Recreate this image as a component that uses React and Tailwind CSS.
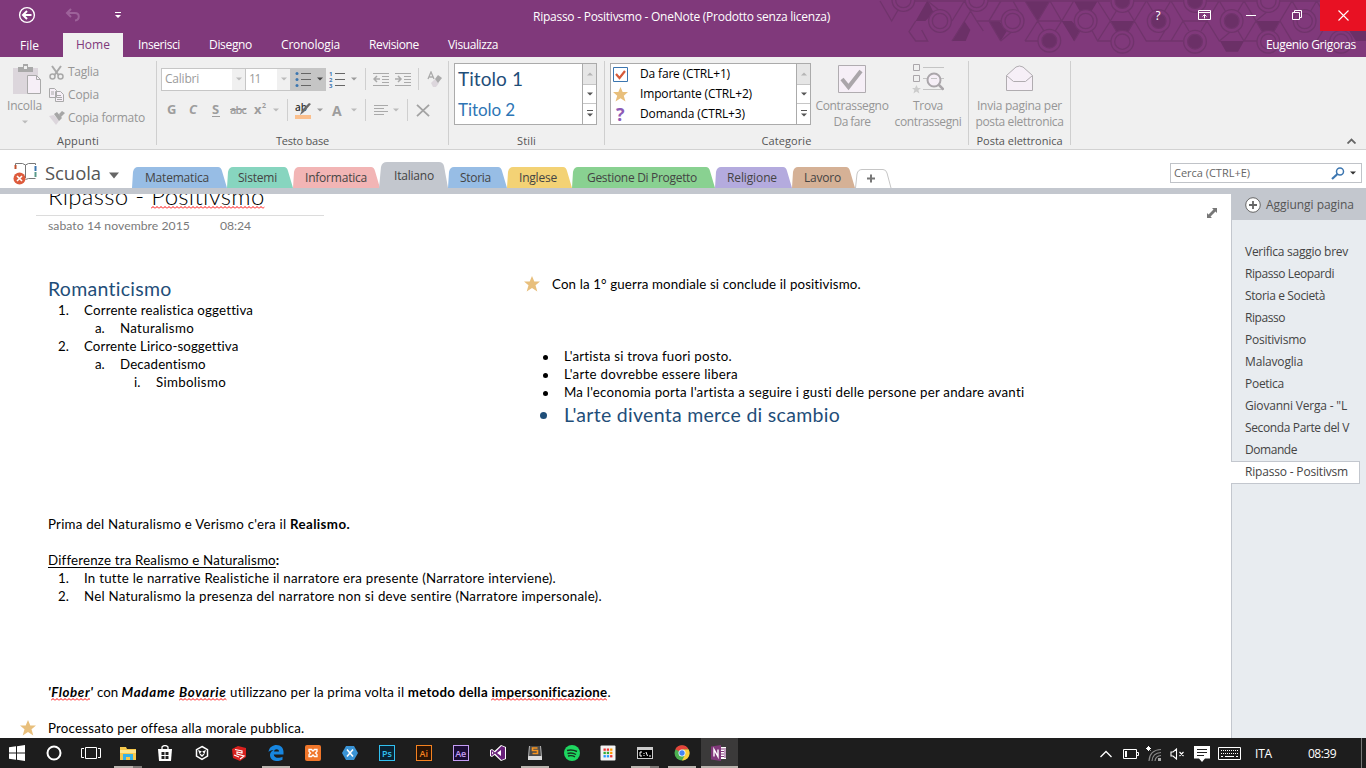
import React, { useLayoutEffect, useRef } from "react";

/* Text run tracked so that it spans a fixed measure. */
function T({ w, className = "", children }) {
  const ref = useRef(null);
  useLayoutEffect(() => {
    const el = ref.current;
    el.style.letterSpacing = "0px";
    const n = el.textContent.length || 1;
    el.style.letterSpacing = (w - el.getBoundingClientRect().width) / n + "px";
  }, [w]);
  return (
    <span ref={ref} className={"inline-block shrink-0 whitespace-pre " + className}>
      {children}
    </span>
  );
}

const Sep = ({ className = "" }) => <div className={"w-px shrink-0 bg-[#cfcfcf] " + className} />;
const Caret = ({ className = "text-[#555]" }) => (
  <svg width="6" height="4" viewBox="0 0 6 4" className={"shrink-0 " + className}>
    <path d="M0 .5h6L3 3.5z" fill="currentColor" />
  </svg>
);
const Star = ({ size = 16, color = "#e8bf7c" }) => (
  <svg width={size} height={size} viewBox="0 0 16 16" className="shrink-0">
    <path d="M8 0l2.300 5.400H16l-4.500 3.800 1.800 6.300L8 12l-5.300 3.500 1.800-6.300L0 5.400h5.700z" fill={color} />
  </svg>
);

function HeaderPattern() {
  const rings = [[100, 0], [210, 63], [320, 0], [428, 63], [647, 63], [757, 125], [1195, 125], [1304, 63], [1413, 125], [1195, 3]];
  const dots = [[538, 122], [757, 3], [866, 63], [975, 3], [975, 125], [1085, 63]];
  return (
    <svg className="absolute right-0 top-0" width="496" height="57" viewBox="0 0 1488 171">
      <g fill="#6b3067">
        <path d="M173 0l18 38-25 25h-29zM283 63l18 27-14 33h-41zM357 63h30l25 28-20 32zM465 3h75l-37 60-20-30zM612 3h71l-18 30h-36zM575 63h30l25 28-18 32zM722 63h71l-18 33h-36zM1158 63h72l-18 33h-36zM1050 123h72l-18 32h-36zM1450 40l20-37h18v120h-30l-20-30z" />
      </g>
      <g fill="none" stroke="#70346c" strokeWidth="4">
        <path d="M30 3l35 60L100 3M130 3h160M350 3h370M790 3h150M1010 3h478M173 3l37 30M137 63l-20 32 20 28h36l-18-33M246 63l37-60 37 60 20 30M246 123l38-60 36-60M320 63h75M357 63l36-60h36l18 32M392 123l36-30M392 3l-35 60 35 60M465 123l38-60 36-60M465 123h45M465 3l38 60 20 32M503 63h72l36-60M575 63l-35-60M575 63l-22 34M612 123l18-30M665 90l18 33h40M683 3l38 60 18 30M683 123l38-60 36-60M793 63l-36-60M793 63l-36 60M793 63l18 30 18 30h110M793 63l36-60M830 3l18 30M902 3l-18 30M884 93l-18 30M939 63l-36-60M939 63l-36 60M939 63h72M939 63l18 30M1011 63l37 60 36-30M1011 63l36-60h75l36 60-36 60M1011 63l-18 30M1048 3l18 30M1122 3l-18 30M1104 93l18 30h40M1158 63l36-30M1158 63l18 30M1230 63l-18 30M1230 63l36-60 18 30M1230 63l36 60h110M1340 3l-18 30M1340 3l36 60 36-60M1376 63l-36 60M1376 63l18 30M1376 63h112" />
        {rings.map(([x, y], i) => (
          <g key={i}>
            <circle cx={x} cy={y} r="34" fill="#80397b" />
            <circle cx={x} cy={y} r="23" />
          </g>
        ))}
        {dots.map(([x, y], i) => (
          <g key={i}>
            <circle cx={x} cy={y} r="34" fill="#80397b" />
            <circle cx={x} cy={y} r="22" fill="#6b3067" />
          </g>
        ))}
      </g>
    </svg>
  );
}

function Header() {
  return (
    <header className="relative h-[57px] overflow-hidden bg-[#80397b] text-white">
      <HeaderPattern />
      <div className="relative flex h-[33px] items-start">
        <div className="flex w-[533px] items-center pl-[18px] pt-[6px]">
          <svg width="18" height="18" viewBox="0 0 18 18" fill="none" stroke="#fff">
            <circle cx="9" cy="9" r="7.4" strokeWidth="1.4" />
            <path d="M13.5 9H5.5M9 5L5 9l4 4" strokeWidth="2" />
          </svg>
          <svg className="ml-[29px]" width="16" height="14" viewBox="0 0 16 14" fill="none" stroke="#9d629a" strokeWidth="2">
            <path d="M2 5h8c5 0 5 7 0 7.500M6 1L2 5l4 4" />
          </svg>
          <svg className="ml-[34px]" width="6" height="8" viewBox="0 0 6 8" fill="#fff">
            <path d="M0 1h6v1H0zM0 4h6L3 7z" />
          </svg>
        </div>
        <div className="flex h-[33px] w-[623px] items-center">
          <T w={297} className="text-[12px]">Ripasso - Positivsmo - OneNote (Prodotto senza licenza)</T>
        </div>
        <svg width="164" height="31" viewBox="0 0 164 31" fill="none" stroke="#fff">
          <text x="-1" y="20" fill="#fff" stroke="none" fontSize="13" fontFamily="Open Sans, sans-serif">?</text>
          <path d="M42.500 10.500h12v9h-12zM42.500 12.500h12M48.500 18.500v-4M46.500 16.500l2-2 2 2M90 15.500h10" />
          <path d="M136.500 12.500h7v7h-7zM138.500 12v-1.500h7v7H144" />
        </svg>
        <div className="flex h-[31px] flex-1 items-center justify-center bg-[#e81123]">
          <svg width="11" height="11" viewBox="0 0 11 11" stroke="#fff" strokeWidth="1.100"><path d="M.5.5l10 10M10.500.5l-10 10" /></svg>
        </div>
      </div>
      <div className="relative flex h-[24px] items-center text-[12px]">
        <T w={19} className="ml-[20px] mt-px">File</T>
        <div className="ml-[24px] flex h-[24px] w-[60px] items-center bg-[#f0f0f0] pl-[13px] text-[#80397b]"><T w={34}>Home</T></div>
        <T w={42} className="ml-[15px]">Inserisci</T>
        <T w={43} className="ml-[29px]">Disegno</T>
        <T w={59} className="ml-[29px]">Cronologia</T>
        <T w={50} className="ml-[29px]">Revisione</T>
        <T w={50} className="ml-[29px]">Visualizza</T>
        <T w={90} className="ml-auto mr-[10px]">Eugenio Grigoras</T>
      </div>
    </header>
  );
}

function Label({ w, children }) {
  return <div className="flex h-[16px] items-center justify-center text-[11px] text-[#555]"><T w={w}>{children}</T></div>;
}

function ClipboardGroup() {
  return (
    <section className="flex w-[156px] flex-col">
      <div className="flex h-[76px] text-[12px] text-[#969696]">
        <div className="flex w-[49px] flex-col items-center pt-[7px]">
          <svg width="30" height="31" viewBox="0 0 30 31" className="ml-[5px]">
            <path d="M1 4h25v26H1z" fill="#dcd6dc" />
            <path d="M6 3h5V0h5v3h5v5H6z" fill="#a9a9a9" /><path d="M12 2h3v3h-3z" fill="#f0f0f0" />
            <path d="M15.500 11.500h9l4 4v14h-13z" fill="#f6eff7" stroke="#aaa" /><path d="M24.500 11.500v4h4" fill="none" stroke="#aaa" />
          </svg>
          <T w={35} className="mt-[3px] leading-[16px]">Incolla</T>
          <Caret className="mt-[6px] text-[#bbb]" />
        </div>
        <div className="flex flex-col pt-[4px]">
          <div className="flex h-[22px] items-center">
            <svg width="15" height="15" viewBox="0 0 15 15" fill="none" stroke="#a9a9a9" strokeWidth="1.500">
              <circle cx="3.500" cy="11.500" r="2.500" /><circle cx="11.500" cy="11.500" r="2.500" /><path d="M3 1l6.500 9M12 1L5.500 10" strokeWidth="2" />
            </svg>
            <T w={31} className="ml-[4px]">Taglia</T>
          </div>
          <div className="flex h-[23px] items-center">
            <svg width="15" height="14" viewBox="0 0 15 14" fill="#f6eff7" stroke="#a9a9a9">
              <path d="M.5.5h5l2 2v7h-7zM6.500 3.500h5l3 3v7h-8z" /><path d="M2 4h3M2 6h3M8 7.500h4M8 9.500h5M8 11.500h5" />
            </svg>
            <T w={31} className="ml-[4px]">Copia</T>
          </div>
          <div className="flex h-[23px] items-center">
            <svg width="16" height="14" viewBox="0 0 16 14">
              <path d="M0 5l5-1 5 6-3 4z" fill="#dcd6dc" /><path d="M5 3l3-2 5 6-3 3zM10 3l3-3 3 2-4 4z" fill="#a6a6a6" />
            </svg>
            <T w={77} className="ml-[3px]">Copia formato</T>
          </div>
        </div>
      </div>
      <Label w={42}>Appunti</Label>
    </section>
  );
}

const Lines = ({ numbered }) => (
  <svg width="16" height="17" viewBox="0 0 16 17" className="shrink-0">
    <path d="M6 2.500h10M6 8.500h10M6 14.500h10" stroke="#666" />
    {numbered ? (
      <g fontSize="6" fontFamily="Open Sans, sans-serif" fontWeight="700" fill="#3c76b0"><text x="0" y="5">1</text><text x="0" y="11">2</text><text x="0" y="17">3</text></g>
    ) : (
      <g fill="#3c76b0"><circle cx="2" cy="2.500" r="1.500" /><circle cx="2" cy="8.500" r="1.500" /><circle cx="2" cy="14.500" r="1.500" /></g>
    )}
  </svg>
);

const Indent = ({ out }) => (
  <svg width="17" height="14" viewBox="0 0 17 14" stroke="#aaa" fill="none" className="shrink-0">
    <path d="M0 1.500h16M9 4.500h7M9 7.500h7M9 10.500h7M0 13.500h16" />
    {out ? <path d="M7 7H1M4 4L1 7l3 3" strokeWidth="1.500" /> : <path d="M0 7h6M3 4l3 3-3 3" strokeWidth="1.500" />}
  </svg>
);

function FontGroup() {
  return (
    <section className="flex w-[291px] flex-col">
      <div className="flex h-[37px] items-center pl-[4px] pt-[7px] text-[12px] text-[#9b9b9b]">
        <div className="flex h-[23px] w-[85px] items-center border border-[#c6c6c6] bg-white pl-[3px]">
          <T w={34}>Calibri</T><div className="ml-auto flex h-full w-[13px] items-center justify-center bg-[#f0f0f0]"><Caret className="text-[#bbb]" /></div>
        </div>
        <div className="flex h-[23px] w-[45px] items-center border border-l-0 border-[#c6c6c6] bg-white pl-[3px]">
          <T w={11}>11</T><div className="ml-auto flex h-full w-[13px] items-center justify-center bg-[#f0f0f0]"><Caret className="text-[#bbb]" /></div>
        </div>
        <div className="flex h-[23px] w-[35px] items-center bg-[#c5c5c5] pl-[4px]"><Lines /><Caret className="ml-[6px] text-[#444]" /></div>
        <div className="ml-[3px] flex items-center"><Lines numbered /><Caret className="ml-[6px]" /></div>
        <Sep className="ml-[8px] h-[22px]" />
        <div className="ml-[7px] flex gap-[5px]"><Indent out /><Indent /></div>
        <Sep className="ml-[6px] h-[22px]" />
        <svg className="ml-[8px]" width="15" height="16" viewBox="0 0 15 16">
          <path d="M1 8l3-7 3 7M2.500 6h4" stroke="#aaa" fill="none" strokeWidth="1.300" /><path d="M4 12l4-4 4 4-3 4H6z" fill="#dcd6dc" /><path d="M8 8l3-4 4 3-4 5z" fill="#aaa" />
        </svg>
      </div>
      <div className="flex h-[32px] items-center pl-[10px] text-[13px] text-[#9d9d9d]">
        <T w={9} className="font-bold">G</T>
        <T w={9} className="ml-[13px] font-bold italic">C</T>
        <T w={8} className="ml-[14px] font-bold underline underline-offset-2">S</T>
        <T w={16} className="ml-[10px] text-[11px] font-semibold line-through">abc</T>
        <T w={8} className="ml-[8px] font-bold">x</T>
        <T w={4} className="mb-[8px] text-[7px] font-bold">2</T>
        <Caret className="ml-[7px] text-[#bbb]" />
        <Sep className="ml-[8px] h-[22px]" />
        <svg className="ml-[7px]" width="17" height="17" viewBox="0 0 17 17">
          <text x="0" y="9" fontSize="10" fontWeight="600" fontFamily="Open Sans, sans-serif" fill="#333">ab</text>
          <path d="M0 13h16v4H0z" fill="#fbbf8c" /><path d="M16 2l-7 8-4 3 2-5 7-7z" fill="#6a6a6a" />
        </svg>
        <Caret className="ml-[5px]" />
        <T w={10} className="ml-[9px] text-[14px] font-bold">A</T>
        <Caret className="ml-[9px] text-[#bbb]" />
        <Sep className="ml-[8px] h-[22px]" />
        <svg className="ml-[8px]" width="14" height="12" viewBox="0 0 14 12" stroke="#aaa"><path d="M0 1.500h14M0 4.500h10M0 7.500h14M0 10.500h10" /></svg>
        <Caret className="ml-[5px] text-[#bbb]" />
        <Sep className="ml-[8px] h-[22px]" />
        <svg className="ml-[8px]" width="15" height="13" viewBox="0 0 16 14" stroke="#a3a3a3" strokeWidth="2"><path d="M1 1l13 12M14 1L1 13" /></svg>
      </div>
      <div className="h-[7px]" />
      <Label w={53}>Testo base</Label>
    </section>
  );
}

function Scroller() {
  return (
    <div className="flex w-[14px] shrink-0 flex-col border-l border-[#ababab]">
      <div className="flex h-[21px] items-center justify-center border-b border-[#c6c6c6] bg-[#e6e6e6]"><Caret className="rotate-180 text-[#b5b5b5]" /></div>
      <div className="flex h-[19px] items-center justify-center border-b border-[#c6c6c6]"><Caret /></div>
      <div className="flex h-[19px] flex-col items-center justify-center gap-[2px]"><div className="h-px w-[6px] bg-[#555]" /><Caret /></div>
    </div>
  );
}

function StylesGroup() {
  return (
    <section className="flex w-[155px] flex-col">
      <div className="ml-[5px] mt-[6px] flex h-[62px] w-[143px] border border-[#ababab] bg-white">
        <div className="flex flex-1 flex-col items-start pl-[3px] font-[Lato]">
          <T w={65} className="h-[31px] text-[19px] leading-[30px] text-[#1f4e79]">Titolo 1</T>
          <T w={57} className="h-[29px] text-[17px] leading-[29px] text-[#2e75b5]">Titolo 2</T>
        </div>
        <Scroller />
      </div>
      <div className="h-[8px]" />
      <Label w={19}>Stili</Label>
    </section>
  );
}

function TagsGroup() {
  return (
    <section className="flex w-[363px] flex-col">
      <div className="flex h-[76px]">
        <div className="ml-[5px] mt-[6px] flex h-[62px] w-[201px] border border-[#ababab] bg-white text-[12px] text-black">
          <div className="flex flex-1 flex-col pl-[2px]">
            <div className="flex h-[20px] items-center gap-[12px]">
              <svg width="15" height="15" viewBox="0 0 15 15" fill="none"><path d="M.5.5h14v14H.5z" stroke="#3c76b0" /><path d="M3 7l3.500 4L12 4" stroke="#d55a3a" strokeWidth="2.200" /></svg>
              <T w={90}>Da fare (CTRL+1)</T>
            </div>
            <div className="flex h-[20px] items-center gap-[12px]"><Star size={15} /><T w={112}>Importante (CTRL+2)</T></div>
            <div className="flex h-[20px] items-center">
              <T w={9} className="ml-[3px] w-[15px] text-[18px] font-bold leading-[20px] text-[#8e5bb5]">?</T><T w={105} className="ml-[9px]">Domanda (CTRL+3)</T>
            </div>
          </div>
          <Scroller />
        </div>
        <div className="ml-[4px] flex w-[74px] flex-col items-center pt-[8px] text-[12px] leading-[16px] text-[#969696]">
          <svg width="28" height="28" viewBox="0 0 28 28"><path d="M.5.5h27v27H.5z" fill="#f6eff7" stroke="#b0acb0" /><path d="M4 14l6.500 8L23 6" fill="none" stroke="#aaa6aa" strokeWidth="4" /></svg>
          <T w={73} className="mt-[5px]">Contrassegno</T><T w={37}>Da fare</T>
        </div>
        <div className="ml-[4px] flex w-[70px] flex-col items-center pt-[6px] text-[12px] leading-[16px] text-[#969696]">
          <svg width="32" height="31" viewBox="0 0 32 31" fill="none" stroke="#aaa6aa">
            <path d="M1.500 1.500h6v6h-6zM1.500 12.500h6v6h-6z" /><path d="M11 4.500h21M11 15.500h21M11 26.500h21" stroke="#c4c4c4" />
            <circle cx="22" cy="17" r="6.500" fill="#f6eff7" strokeWidth="2" /><path d="M26.500 21.500l5 5" strokeWidth="2.500" /><path d="M19 15.500h6" stroke="#c4c4c4" />
            <path d="M4.500 22l1.300 3H9l-2.600 2 1 3.500-3-2-3 2 1-3.500L0 25h3z" fill="#ccc" stroke="none" />
          </svg>
          <T w={30} className="mt-[4px]">Trova</T><T w={67}>contrassegni</T>
        </div>
      </div>
      <Label w={50}>Categorie</Label>
    </section>
  );
}

function MailGroup() {
  return (
    <section className="flex w-[101px] flex-col">
      <div className="flex h-[76px] flex-col items-center pt-[8px] text-[12px] leading-[16px] text-[#969696]">
        <svg width="27" height="27" viewBox="0 0 27 27" fill="#f6eff7" stroke="#b0acb0"><path d="M.5 10.500L10 2q3.500-2 7 0l9.500 8.500v15H.5z" /><path d="M.5 10.500l7 6h12l7-6" /></svg>
        <T w={85} className="mt-[6px]">Invia pagina per</T><T w={88}>posta elettronica</T>
      </div>
      <Label w={86}>Posta elettronica</Label>
    </section>
  );
}

function Ribbon() {
  const sep = "mt-[4px] h-[84px]";
  return (
    <div className="flex h-[93px] border-b border-[#d2d2d2] bg-[#f0f0f0]">
      <ClipboardGroup /><Sep className={sep} />
      <FontGroup /><Sep className={sep} />
      <StylesGroup /><Sep className={sep} />
      <TagsGroup /><Sep className={sep} />
      <MailGroup /><Sep className={sep} />
      <svg className="mb-[5px] ml-auto mr-[10px] self-end" width="9" height="6" viewBox="0 0 9 6" fill="none" stroke="#666" strokeWidth="1.800"><path d="M.5 5.500l4-4 4 4" /></svg>
    </div>
  );
}

const tabs = [
  ["Matematica", 95, 64, 13, "#97bde5"],
  ["Sistemi", 66, 39, 11, "#87d5bf"],
  ["Informatica", 87, 62, 12, "#f2b5b5"],
  ["Italiano", 68, 40, 14, "#c3c7ce", true],
  ["Storia", 59, 31, 12, "#97bde5"],
  ["Inglese", 65, 38, 12, "#f3d275"],
  ["Gestione Di Progetto", 143, 110, 15, "#89d191"],
  ["Religione", 77, 50, 12, "#b4abde"],
  ["Lavoro", 63, 37, 12, "#d5b196"],
];

function SectionTabs() {
  return (
    <div className="flex h-[38px] items-end bg-white">
      <svg className="mb-[2px] ml-[13px]" width="25" height="24" viewBox="0 0 25 24" fill="none">
        <path d="M2.500 3V1.500h7l3 1.500 3-1.500h7V3M12.500 3v13M12.500 17.500l3-1h7" stroke="#777" />
        <path d="M2.500 3v4" stroke="#c0502e" strokeWidth="2" /><path d="M22.500 4v5" stroke="#3c76b0" strokeWidth="2" /><path d="M22.500 10v5" stroke="#5a9a8a" strokeWidth="2" />
        <circle cx="6.500" cy="16.500" r="6" fill="#dd5b3c" /><path d="M4 14l5 5M9 14l-5 5" stroke="#fff" strokeWidth="1.600" />
      </svg>
      <T w={56} className="mb-[3px] ml-[7px] text-[18.500px] leading-[24px] text-[#555]">Scuola</T>
      <svg className="mb-[9px] ml-[8px]" width="10" height="7" viewBox="0 0 10 7"><path d="M0 .5h10l-5 6z" fill="#666" /></svg>
      <div className="ml-[13px] flex items-end text-[12px] text-[#444]">
        {tabs.map(([name, w, tw, pad, color, active]) => (
          <div key={name} className="relative flex items-center" style={{ width: w, height: active ? 26 : 21, paddingLeft: pad }}>
            <svg className="absolute left-0 top-0 overflow-visible" width={w} height={active ? 26 : 21}>
              <path fill={color} d={active ? `M-1 26L1 5Q2 0 7 0H${w - 9}Q${w - 5} 0 ${w - 4} 4L${w} 26Z` : `M0 21L1 5Q2 0 6 0H${w - 9}Q${w - 6} 0 ${w - 5} 4L${w} 21Z`} />
            </svg>
            <T w={tw} className={"relative " + (active ? "mt-[2px]" : "")}>{name}</T>
          </div>
        ))}
        <svg width="37" height="19" viewBox="0 0 37 19" fill="none">
          <path d="M.5 19L2 5Q3 .5 7 .5H28Q31 .5 32 4L36 19" stroke="#c6c6c6" /><path d="M12 9.500h8M16 5.500v8" stroke="#777" strokeWidth="2" />
        </svg>
      </div>
      <div className="mb-[5px] ml-auto mr-[4px] flex h-[20px] w-[192px] items-center border border-[#c0c3c8] pl-[3px] text-[11px] text-[#666]">
        <T w={76}>Cerca (CTRL+E)</T>
        <svg className="ml-auto" width="14" height="13" viewBox="0 0 14 13" fill="none" stroke="#3c76b0"><circle cx="9" cy="4.500" r="3.500" strokeWidth="1.500" /><path d="M6.500 7L1 12" strokeWidth="2.200" /></svg>
        <Caret className="ml-[5px] mr-[5px] text-[#333]" />
      </div>
    </div>
  );
}

function Item({ mark, mw = "w-[12px]", indent, gap = "gap-[15px]", w, children }) {
  return (
    <div className={"flex h-[18px] items-center leading-[18px] " + indent + " " + gap}>
      <span className={"shrink-0 whitespace-pre " + mw}>{mark}</span>
      <T w={w}>{children}</T>
    </div>
  );
}

const Squiggle = ({ children, className = "bottom-0" }) => (
  <span className="relative inline-block">
    {children}
    <svg className={"absolute left-0 h-[3px] w-full " + className} height="3">
      <defs><pattern id="sq" width="4" height="3" patternUnits="userSpaceOnUse"><path d="M0 2.500L2 .5l2 2" fill="none" stroke="#f00" /></pattern></defs>
      <rect width="100%" height="3" fill="url(#sq)" />
    </svg>
  </span>
);

/* Free-form page: every block is a note container placed anywhere on the canvas. */
function Canvas() {
  return (
    <main className="relative flex-1 overflow-hidden bg-white font-[Lato] text-[13.300px] text-black">
      <div className="absolute left-[36px] top-[-14px] w-[288px] border-b border-[#dcdcdc] pl-[12px]">
        <T w={217} className="block h-[35px] w-max text-[24px] font-light leading-[32px]">Ripasso - <Squiggle className="bottom-[3px]">Positivsmo</Squiggle></T>
      </div>
      <div className="absolute left-[48px] top-[23px] flex text-[12.200px] leading-[18px] text-[#7a7a7a]">
        <T w={142}>sabato 14 novembre 2015</T><T w={31} className="ml-[30px]">08:24</T>
      </div>
      <svg className="absolute left-[1206px] top-[13px]" width="12" height="12" viewBox="0 0 12 12" fill="#777"><path d="M6 1h5v5L9.500 4.500l-5 5L6 11H1V6l1.500 1.500 5-5z" /></svg>

      <div className="absolute left-[48px] top-[82px] flex flex-col">
        <T w={124} className="self-start text-[19.500px] leading-[25px] text-[#1f4e79]">Romanticismo</T>
        <Item mark="1." indent="pl-[10px]" gap="gap-[14px]" w={169}>Corrente realistica oggettiva</Item>
        <Item mark="a." indent="pl-[47px]" gap="gap-[13px]" w={74}>Naturalismo</Item>
        <Item mark="2." indent="pl-[10px]" gap="gap-[14px]" w={154}>Corrente Lirico-soggettiva</Item>
        <Item mark="a." indent="pl-[47px]" gap="gap-[13px]" w={86}>Decadentismo</Item>
        <Item mark="i." indent="pl-[86px]" gap="gap-[10px]" w={70}>Simbolismo</Item>
      </div>

      <div className="absolute left-[524px] top-[81px] flex items-center gap-[12px]">
        <Star /><T w={309} className="leading-[18px]">Con la 1° guerra mondiale si conclude il positivismo.</T>
      </div>
      <div className="absolute left-[540px] top-[153px] flex flex-col">
        {[["L'artista si trova fuori posto.", 168], ["L'arte dovrebbe essere libera", 174], ["Ma l'economia porta l'artista a seguire i gusti delle persone per andare avanti", 461]].map(([s, w]) => (
          <div key={s} className="flex h-[18px] items-center pl-[3px]">
            <div className="mr-[16px] mt-[2px] h-[5px] w-[5px] rounded-full bg-black" /><T w={w} className="leading-[18px]">{s}</T>
          </div>
        ))}
        <div className="flex h-[26px] items-center text-[#1f4e79]">
          <div className="mr-[17px] mt-[2px] h-[7px] w-[7px] rounded-full bg-[#1f4e79]" /><T w={276} className="text-[19.500px] leading-[25px]">L'arte diventa merce di scambio</T>
        </div>
      </div>

      <div className="absolute left-[48px] top-[321px] flex flex-col items-start leading-[18px]">
        <div className="flex"><T w={242}>Prima del Naturalismo e Verismo c'era il </T><T w={60} className="font-bold">Realismo.</T></div>
        <T w={231} className="mt-[18px]"><u className="underline-offset-2">Differenze tra Realismo e Naturalismo</u><b>:</b></T>
        <Item mark="1." indent="pl-[10px]" gap="gap-[14px]" w={472}>In tutte le narrative Realistiche il narratore era presente (Narratore interviene).</Item>
        <Item mark="2." indent="pl-[10px]" gap="gap-[14px]" w={518}>Nel Naturalismo la presenza del narratore non si deve sentire (Narratore impersonale).</Item>
      </div>

      <div className="absolute left-[20px] top-[489px] flex flex-col items-start leading-[18px]">
        <div className="ml-[28px] flex">
          <T w={45.5} className="font-bold italic">'<Squiggle>Flober</Squiggle>'</T>
          <T w={28}> con </T>
          <T w={105} className="font-bold italic">Madame <Squiggle>Bovarie</Squiggle></T>
          <T w={181.5}> utilizzano per la prima volta il </T>
          <T w={199.5} className="font-bold">metodo della <Squiggle>impersonificazione</Squiggle></T>
          <T w={4}>.</T>
        </div>
        <div className="mt-[18px] flex items-center gap-[12px]"><Star /><T w={256}>Processato per offesa alla morale pubblica.</T></div>
      </div>
    </main>
  );
}

const pages = [
  ["Verifica saggio brev", 103], ["Ripasso Leopardi", 89], ["Storia e Società", 80], ["Ripasso", 40], ["Positivismo", 61],
  ["Malavoglia", 58], ["Poetica", 39], ['Giovanni Verga - "L', 102], ["Seconda Parte del V", 104], ["Domande", 52],
];

function PageList() {
  return (
    <aside className="flex w-[135px] flex-col bg-[#e8ecf0] text-[12px] text-[#444]">
      <div className="flex h-[26px] items-center bg-[#c3c7ce] pb-[4px] pl-[14px] text-[#555]">
        <svg width="16" height="16" viewBox="0 0 16 16"><circle cx="8" cy="8" r="7.300" fill="#fff" stroke="#666" /><path d="M4 8h8M8 4v8" stroke="#666" strokeWidth="1.800" /></svg>
        <T w={88} className="ml-[5px]">Aggiungi pagina</T>
      </div>
      <div className="flex flex-col border-l border-[#c3c7ce] pl-[13px] pt-[21px]">
        {pages.map(([s, w]) => (
          <div key={s} className="flex h-[22px] items-center"><T w={w}>{s}</T></div>
        ))}
      </div>
      <div className="mr-[6px] flex h-[23px] items-center border border-l-0 border-[#c3c7ce] bg-white pb-px pl-[14px]"><T w={103}>Ripasso - Positivsm</T></div>
      <div className="flex-1 border-l border-[#c3c7ce]" />
    </aside>
  );
}

function Adobe({ label, color, bg }) {
  return <div className="flex h-[16px] w-[16px] items-center justify-center border text-[9px] font-semibold leading-none" style={{ color, borderColor: color, background: bg }}>{label}</div>;
}

const S = ({ children, s = 16 }) => <svg width={s} height={s} viewBox="0 0 16 16" fill="none">{children}</svg>;

const apps = [
  { icon: <S><path d="M0 2.300l7-1v6.200H0zM8 1.200L16 0v7.500H8zM0 8.500h7v6.200l-7-1zM8 8.500h8V16l-8-1.200z" fill="#fff" /></S> },
  { icon: <S><circle cx="8" cy="8" r="6.500" stroke="#fff" strokeWidth="2" /></S> },
  { icon: <svg width="20" height="14" viewBox="0 0 20 14" fill="none" stroke="#fff"><path d="M4.500 1.500h11v11h-11zM3 2.500H.5v9H3M17 2.500h2.500v9H17" /></svg> },
  { icon: <S><path d="M0 2h6l1 2h9v11H0z" fill="#f6c84c" /><path d="M0 5h16v3H0z" fill="#fde58f" /><path d="M3 15V9h10v6h-3v-3H6v3z" fill="#35b1e8" /></S>, bar: true, double: true },
  { icon: <S><path d="M1 4h14l-1 12H2z" fill="#fff" /><path d="M5 5V2q3-3 6 0v3" stroke="#fff" strokeWidth="1.300" /><path d="M4.500 7h3v3h-3zM8.500 7h3v3h-3zM4.500 11h3v3h-3zM8.500 11h3v3h-3z" fill="#222" /></S> },
  { icon: <S><path d="M8 1.500l5.500 3.200v6.500L8 14.500l-5.500-3.300V4.700z" stroke="#fff" strokeWidth="1.500" /><path d="M4 5l4 1.500L12 5l-2 5-2 2-2-2z" fill="#fff" /><path d="M8 6l2 2.500L8 10 6 8.500z" fill="#222" /></S> },
  { icon: <S><path d="M1 4l6-3 8 2v9l-6 4-7-3z" fill="#d8201e" /><path d="M4 4.500l7 1.500v2L6 7v2l7 2-4 3M3 10l5 2" stroke="#fff" strokeWidth="1.200" /></S> },
  { icon: <S><path d="M.5 7C1 2 5 0 8.500 0 13 0 15.500 3 15.500 7v2.500H5.800c.3 4 5.700 4 8.700 2.200v3C9.500 17.500 2 16 2 10c0-2.300 1.500-4 3.500-5C3 5 1.500 6 .5 7zM6 6.500h5C11 3.500 6.500 3.500 6 6.500z" fill="#1786e0" /></S>, bar: true },
  { icon: <S><rect width="16" height="16" rx="2" fill="#f0762a" /><path d="M4 4.500h2.500L8 6l1.500-1.500H12v2L10.500 8 12 9.500v2H9.500L8 10l-1.500 1.500H4v-2L5.500 8 4 6.500z" stroke="#fff" strokeWidth="1.300" /></S> },
  { icon: <S><path d="M4 1h8l4 7-4 7H4L0 8z" fill="#3a94d6" /><path d="M5 4.500l6 7M11 4.500l-6 7" stroke="#fff" strokeWidth="1.600" /></S> },
  { icon: <Adobe label="Ps" color="#31c0f0" bg="#0a2233" /> },
  { icon: <Adobe label="Ai" color="#f58220" bg="#2a1405" /> },
  { icon: <Adobe label="Ae" color="#c49cf5" bg="#1c0d36" /> },
  { icon: <S><path d="M11 0l5 2v12l-5 2-6.500-6L2 12l-2-1V5l2-1 2.500 2z" fill="#fff" /><path d="M11.500 1l3.500 1.500v11L11.500 15 5 8.500 2 11 1 10.500v-5L2 5l3 2.500zM11 5L7 8l4 3zM2 6.500v3L3.500 8z" fill="#68217a" fillRule="evenodd" /></S> },
  { icon: <S><path d="M2 1h12l1 11H1z" fill="#4a4a4a" /><path d="M1 11h14v4H1z" fill="#ddd" /><path d="M10.500 3h-5v2.500h5v3h-5" stroke="#f7941e" strokeWidth="1.600" /><path d="M1.500 12L2.500 1M14.500 12l-1-11" stroke="#ccc" strokeWidth=".8" /></S>, bar: true },
  { icon: <S><circle cx="8" cy="8" r="8" fill="#1ed760" /><path d="M3 5.500q5-1.500 10 1M3.500 8.500q4.500-1.500 8.500 1M4 11q4-1 7 .8" stroke="#16351f" strokeWidth="1.400" /></S> },
  { icon: <S><rect x=".5" y=".5" width="15" height="15" rx="1" fill="#f4f4f4" />{["#e33", "#e33", "#f90", "#3a3", "#3a3", "#f90", "#29f", "#29f", "#e33"].map((c, i) => <rect key={i} x={3.500 + (i % 3) * 3.300} y={3.500 + Math.floor(i / 3) * 3.300} width="2.300" height="2.300" fill={c} />)}</S> },
  { icon: <S><path d="M0 2h16v12H0z" fill="#ccc" /><path d="M1 5h14v8H1z" fill="#000" /><path d="M5 7H3v4h2M7 8v1M7 10v1M9 7l1.500 4M12 11h2" stroke="#fff" /></S>, bar: true, double: true },
  { icon: <S><circle cx="8" cy="8" r="7.500" fill="#4caf50" /><path d="M8 8L1.300 4.300A7.500 7.500 0 0 1 14.700 4.500H8z" fill="#e5443a" /><path d="M14.700 4.500A7.500 7.500 0 0 1 8 15.500L11.500 9 9 4.500z" fill="#fcd03c" /><circle cx="8" cy="8" r="3.500" fill="#fff" /><circle cx="8" cy="8" r="2.700" fill="#4385f4" /></S>, bar: true },
  { icon: <S><path d="M9 2h6v12H9z" fill="#fff" /><path d="M10 4h3M10 6.500h3M10 9h3M10 11.500h3M14 3v10" stroke="#80397b" /><path d="M0 1.500L10 0v16L0 14.500z" fill="#80397b" /><path d="M3 11.500v-7l4 7v-7" stroke="#fff" strokeWidth="1.400" /></S>, bar: true, active: true },
];

function Taskbar() {
  return (
    <footer className="flex h-[30px] bg-[#1d1d1d] text-white">
      <div className="-ml-[1px] flex">
        {apps.map((a, i) => (
          <div key={i} className={"flex w-[36.950px] shrink-0 flex-col items-center " + (a.active ? "bg-[#3b3a3a]" : "")}>
            <div className="flex h-[28px] items-center pt-[2px]">{a.icon}</div>
            {a.bar && (
              <div className={"flex h-[2px] justify-end bg-[#b9b4ae] " + (a.active ? "w-full" : "w-[28px]")}>{a.double && <div className="w-[9px] bg-[#7c7976]" />}</div>
            )}
          </div>
        ))}
      </div>
      <div className="ml-auto flex items-center pt-[1px] text-[12px]">
        <svg width="12" height="8" viewBox="0 0 12 8" fill="none" stroke="#fff" strokeWidth="1.300"><path d="M.5 7L6 1.500 11.500 7" /></svg>
        <svg className="ml-[11px]" width="16" height="10" viewBox="0 0 16 10" fill="none" stroke="#fff"><path d="M.5 .5h13v9H.5zM14 3.500h1.500v3H14" /><path d="M2 2h2v6H2z" fill="#fff" stroke="none" /></svg>
        <svg className="ml-[7px]" width="16" height="16" viewBox="0 0 16 16" fill="none"><path d="M2.500 0v5M0 2.500h5M1 1l3.500 3.500M4 1L1 4" stroke="#fff" /><path d="M3 15Q3.500 4 15 3.500M6 15Q6.500 7 15 6.500M9 15q.5-5 6-5.500" stroke="#888" strokeWidth="1.200" /><path d="M12 12h3v3h-3z" fill="#aaa" /></svg>
        <svg className="ml-[8px]" width="15" height="12" viewBox="0 0 15 12" fill="none" stroke="#fff"><path d="M1 4h2l3.500-3v10L3 8H1zM9.500 4l4 4M13.500 4l-4 4" strokeWidth="1.100" /></svg>
        <svg className="ml-[9px]" width="16" height="16" viewBox="0 0 16 16"><path d="M0 0h16v12.500h-5L8 16l-3-3.500H0z" fill="#fff" /><path d="M3 3.500h10M3 6.500h10M3 9.500h7" stroke="#222" /></svg>
        <svg className="ml-[8px]" width="23" height="13" viewBox="0 0 23 13" fill="none" stroke="#fff"><path d="M.5.5h22v12H.5z" /><path d="M3 3.500h17M3 6.500h17" strokeDasharray="1 1" /><path d="M3 9.500h2M7 9.500h9M18 9.500h2" /></svg>
        <T w={17} className="ml-[14px]">ITA</T>
        <T w={28} className="ml-[36px]">08:39</T>
        <div className="-mt-[1px] ml-[25px] mr-[4px] h-[30px] w-px bg-[#777]" />
      </div>
    </footer>
  );
}

export default function App() {
  return (
    <div className="flex h-[768px] w-[1366px] flex-col overflow-hidden bg-white font-['Open_Sans',sans-serif]">
      <Header />
      <Ribbon />
      <SectionTabs />
      <div className="h-[6px] shrink-0 bg-[#c3c7ce]" />
      <div className="flex min-h-0 flex-1">
        <Canvas />
        <PageList />
      </div>
      <Taskbar />
    </div>
  );
}
